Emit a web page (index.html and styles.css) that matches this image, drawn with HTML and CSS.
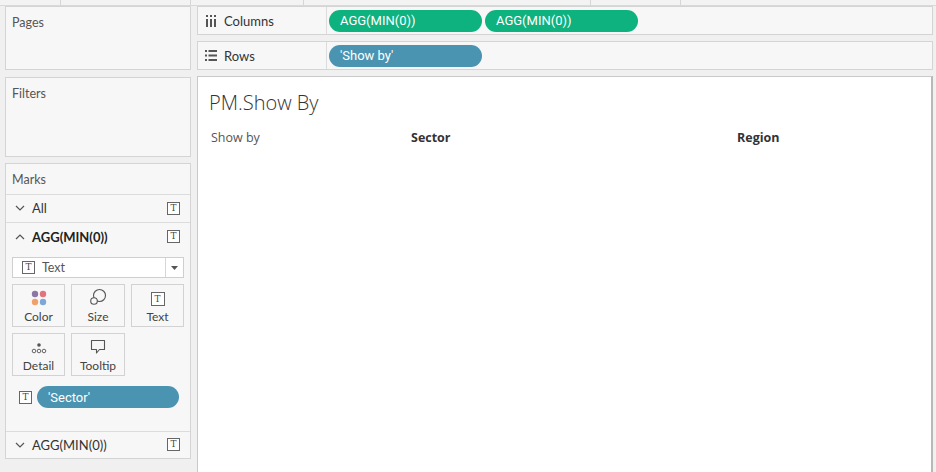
FILE: index.html
```html
<!DOCTYPE html>
<html>
<head>
<meta charset="utf-8">
<link rel="stylesheet" href="styles.css">
</head>
<body>
<div class="toolbar">
  <span class="seg s1"></span><span class="seg s2"></span><span class="seg s3"></span><span class="seg s4"></span><span class="seg s5"></span><span class="seg s6"></span>
</div>
<div class="main">
  <div class="left">
    <div class="card pages"><div class="card-title">Pages</div></div>
    <div class="card filters"><div class="card-title">Filters</div></div>
    <div class="card marks">
      <div class="marks-head">Marks</div>
      <div class="mrow">
        <svg class="chev" width="10" height="6" viewBox="0 0 10 6"><polyline points="1,1 5,5 9,1" fill="none" stroke="#555" stroke-width="1.2"/></svg>
        <span class="mlabel">All</span>
        <span class="ticon">T</span>
      </div>
      <div class="mrow">
        <svg class="chev" width="10" height="6" viewBox="0 0 10 6"><polyline points="1,5 5,1 9,5" fill="none" stroke="#555" stroke-width="1.2"/></svg>
        <span class="mlabel bold">AGG(MIN(0))</span>
        <span class="ticon">T</span>
      </div>
      <div class="mbody">
        <div class="dropdown">
          <span class="ticon">T</span>
          <span class="ddtext">Text</span>
          <span class="ddarrow"><svg width="7" height="4" viewBox="0 0 7 4"><polygon points="0,0 7,0 3.5,4" fill="#555"/></svg></span>
        </div>
        <div class="btns">
          <div class="btn">
            <svg width="18" height="16" viewBox="0 0 18 16"><circle cx="5" cy="4" r="3.2" fill="#8b76a8"/><circle cx="13" cy="4" r="3.2" fill="#e4727c"/><circle cx="5" cy="12" r="3.2" fill="#f0a06b"/><circle cx="13" cy="12" r="3.2" fill="#7ea7d8"/></svg>
            <span>Color</span>
          </div>
          <div class="btn">
            <svg width="18" height="18" viewBox="0 0 18 18"><circle cx="10.5" cy="7.5" r="6" fill="none" stroke="#555" stroke-width="1.1"/><circle cx="5" cy="13" r="3.3" fill="#f7f7f7" stroke="#555" stroke-width="1.1"/></svg>
            <span>Size</span>
          </div>
          <div class="btn">
            <span class="ticon big">T</span>
            <span>Text</span>
          </div>
          <div class="btn">
            <svg width="18" height="14" viewBox="0 0 18 14"><circle cx="9" cy="4" r="1.8" fill="#555"/><circle cx="4" cy="10" r="1.8" fill="none" stroke="#555" stroke-width="0.9"/><circle cx="9" cy="10" r="1.8" fill="none" stroke="#555" stroke-width="0.9"/><circle cx="14" cy="10" r="1.8" fill="none" stroke="#555" stroke-width="0.9"/></svg>
            <span>Detail</span>
          </div>
          <div class="btn">
            <svg width="18" height="16" viewBox="0 0 18 16"><path d="M2.5 1.5 H15.5 V10.5 H10.5 L7.5 14 V10.5 H2.5 Z" fill="none" stroke="#555" stroke-width="1.1" stroke-linejoin="round"/></svg>
            <span>Tooltip</span>
          </div>
        </div>
        <div class="mfield">
          <span class="ticon">T</span>
          <span class="pill blue wide">'Sector'</span>
        </div>
      </div>
      <div class="mrow last">
        <svg class="chev" width="10" height="6" viewBox="0 0 10 6"><polyline points="1,1 5,5 9,1" fill="none" stroke="#555" stroke-width="1.2"/></svg>
        <span class="mlabel">AGG(MIN(0))</span>
        <span class="ticon">T</span>
      </div>
    </div>
  </div>
  <div class="right">
    <div class="shelf">
      <div class="shelf-label">
        <svg width="12" height="12" viewBox="0 0 12 12"><rect x="1" y="0" width="2" height="2" fill="#555"/><rect x="5" y="0" width="2" height="2" fill="#555"/><rect x="9" y="0" width="2" height="2" fill="#555"/><rect x="1" y="4" width="2" height="8" fill="#555"/><rect x="5" y="4" width="2" height="8" fill="#555"/><rect x="9" y="4" width="2" height="8" fill="#555"/></svg>
        <span>Columns</span>
      </div>
      <div class="shelf-pills">
        <span class="pill green">AGG(MIN(0))</span>
        <span class="pill green">AGG(MIN(0))</span>
      </div>
    </div>
    <div class="shelf">
      <div class="shelf-label">
        <svg width="12" height="11" viewBox="0 0 12 11"><rect x="0" y="0" width="2" height="2" fill="#555"/><rect x="0" y="4.5" width="2" height="2" fill="#555"/><rect x="0" y="9" width="2" height="2" fill="#555"/><rect x="3.5" y="0" width="8.5" height="2" fill="#555"/><rect x="3.5" y="4.5" width="8.5" height="2" fill="#555"/><rect x="3.5" y="9" width="8.5" height="2" fill="#555"/></svg>
        <span>Rows</span>
      </div>
      <div class="shelf-pills">
        <span class="pill blue">'Show by'</span>
      </div>
    </div>
    <div class="viz">
      <div class="viz-title">PM.Show By</div>
      <div class="viz-head">
        <span class="h-show">Show by</span>
        <span class="h-col">Sector</span>
        <span class="h-col">Region</span>
      </div>
    </div>
  </div>
</div>
</body>
</html>
```

FILE: styles.css
```css
* { box-sizing: border-box; }
html, body { margin: 0; padding: 0; }
body {
  width: 936px;
  height: 472px;
  overflow: hidden;
  background: #f0f0f0;
  font-family: Lato, "Open Sans", sans-serif;
  color: #333;
}
.toolbar {
  height: 6px;
  display: flex;
  border-bottom: 1px solid #d9d9d9;
  background: #f3f3f3;
}
.seg { height: 5px; border-right: 1px solid #d6d6d6; }
.s1 { width: 61px; }
.s2 { width: 130px; }
.s3 { width: 113px; }
.s4 { width: 287px; }
.s5 { width: 90px; }
.s6 { flex: 1; border-right: none; }

.main {
  display: grid;
  grid-template-columns: 186px 736px;
  column-gap: 6px;
  padding-left: 5px;
  height: 466px;
}
.left { display: flex; flex-direction: column; }
.card {
  background: #f7f7f7;
  border: 1px solid #d4d4d4;
}
.card-title {
  font-size: 12.5px;
  color: #555;
  padding: 8px 0 0 6px;
}
.pages { height: 64px; }
.filters { height: 80px; margin-top: 7px; }
.marks { height: 296px; margin-top: 6px; display: flex; flex-direction: column; }
.marks-head {
  height: 31px;
  font-size: 12.5px;
  color: #555;
  padding: 8px 0 0 6px;
  border-bottom: 1px solid #dcdcdc;
}
.mrow {
  height: 28px;
  display: flex;
  align-items: center;
  padding: 0 10px 1px 9px;
  border-bottom: 1px solid #dcdcdc;
}
.mrow.last { border-bottom: none; border-top: 1px solid #dcdcdc; margin-top: auto; height: 27px; }
.mrow:nth-child(3) { border-bottom: none; }
.chev { flex: none; margin-right: 7px; }
.mlabel { flex: 1; font-size: 13px; color: #333; }
.mlabel.bold { font-weight: 700; color: #222; }
.ticon {
  width: 13px;
  height: 13px;
  border: 1px solid #666;
  font-family: "DejaVu Serif", "Liberation Serif", serif;
  font-size: 9px;
  line-height: 11px;
  text-align: center;
  color: #444;
  flex: none;
  background: #fff;
}
.ticon.big { width: 14px; height: 14px; line-height: 12px; }
.mbody { padding: 6px 6px 0 6px; }
.dropdown {
  height: 21px;
  background: #fff;
  border: 1px solid #cfcfcf;
  display: flex;
  align-items: center;
  padding-left: 9px;
}
.ddtext { flex: 1; font-size: 12.5px; color: #555; margin-left: 7px; }
.ddarrow {
  width: 18px;
  height: 100%;
  border-left: 1px solid #d6d6d6;
  display: flex;
  align-items: center;
  justify-content: center;
}
.btns {
  display: grid;
  grid-template-columns: 53px 54px 53px;
  column-gap: 6px;
  row-gap: 6px;
  margin-top: 6px;
}
.btn {
  height: 43px;
  border: 1px solid #d2d2d2;
  background: #f7f7f7;
  display: flex;
  flex-direction: column;
  align-items: center;
  justify-content: flex-end;
  padding-bottom: 2px;
  font-size: 12px;
  color: #444;
  gap: 3px;
}
.mfield {
  display: flex;
  align-items: center;
  margin-top: 10px;
  padding-left: 7px;
  gap: 5px;
}
.pill {
  display: inline-flex;
  align-items: center;
  height: 22px;
  border-radius: 11px;
  color: #fff;
  font-family: Roboto, Lato, sans-serif;
  font-size: 13px;
  padding-left: 11px;
  width: 153px;
  flex: none;
}
.pill.green { background: #0db27f; }
.pill.blue { background: #4a94b2; }
.pill.wide { width: 142px; }

.right { display: flex; flex-direction: column; }
.shelf {
  height: 29px;
  background: #f7f7f7;
  border: 1px solid #d4d4d4;
  display: flex;
  margin-bottom: 6px;
}
.shelf-label {
  width: 129px;
  border-right: 1px solid #dcdcdc;
  display: flex;
  align-items: center;
  padding-left: 7px;
  gap: 7px;
  font-size: 13px;
  color: #333;
}
.shelf-pills {
  display: flex;
  align-items: center;
  padding-left: 2px;
  gap: 3px;
}
.viz {
  flex: 1;
  background: #fff;
  border: 1px solid #c9c9c9;
  border-right: 2px solid #b8b8b8;
  padding: 14px 0 0 11px;
  margin-bottom: -6px;
  font-family: "Open Sans", sans-serif;
}
.viz-title {
  font-size: 20px;
  font-weight: 300;
  color: #333;
  line-height: 24px;
}
.viz-head {
  display: grid;
  grid-template-columns: 200px 326px 1fr;
  margin-top: 14px;
  padding-left: 2px;
  font-size: 12.5px;
}
.h-show { color: #555; }
.h-col { font-weight: 700; color: #333; }
```
